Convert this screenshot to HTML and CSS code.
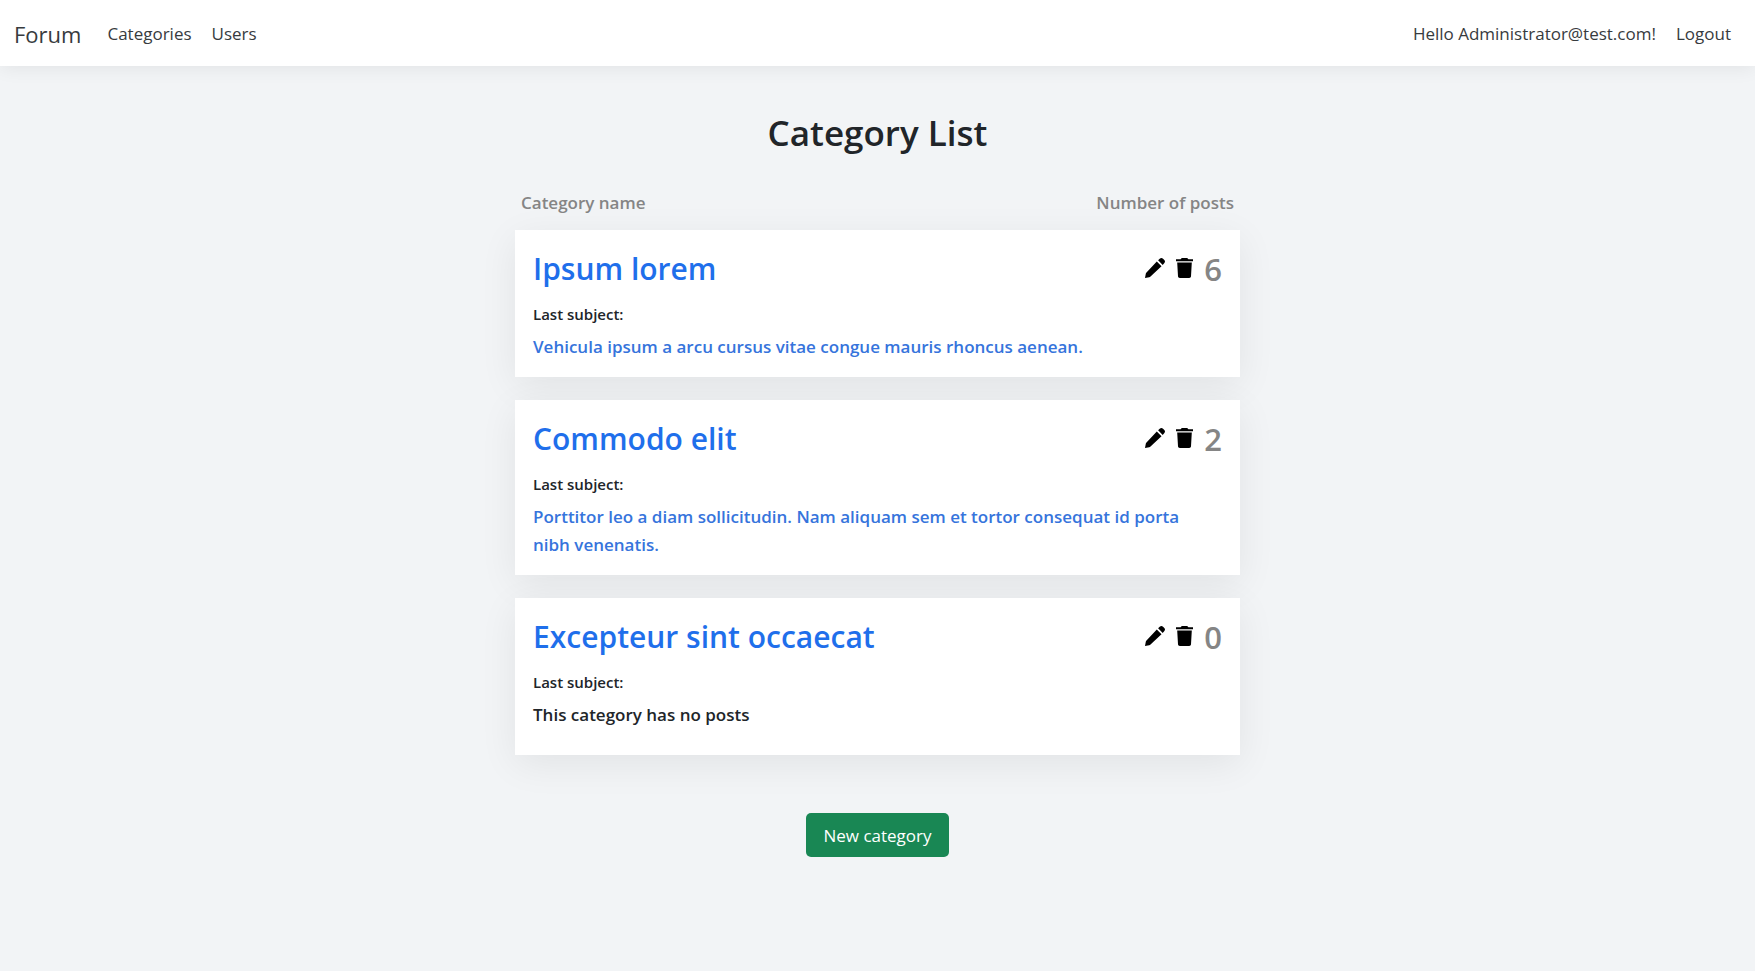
FILE: index.html
```html
<!DOCTYPE html>
<html lang="en">
<head>
<meta charset="utf-8">
<meta name="viewport" content="width=device-width, initial-scale=1">
<title>Category List - Forum</title>
<link rel="stylesheet" href="styles.css">
</head>
<body>
<svg class="sprite" aria-hidden="true">
  <symbol id="pencil" viewBox="0 0 20 20"><path d="M11.800 3.500l4.700 4.700L5.500 18.500c-.4.400-.8.600-1.300.7L0 20l.8-4.200c.1-.5.300-.9.700-1.300zM13.100 2.300l1.600-1.500c1.100-1.100 2.400-1 3.300-.1l1.300 1.300c.9.900 1 2.200-.1 3.300L17.700 6.900z"/></symbol>
  <symbol id="trash" viewBox="0 0 17 20"><path d="M0 1.200H4.600L5.800 0H11.200L12.400 1.200H17V3.200H0zM1.200 4.400H15.800L15 18.300C14.900 19.300 14.200 20 13.200 20H3.800C2.800 20 2.100 19.300 2 18.300z"/></symbol>
</svg>
<header class="navbar">
  <a class="brand" href="#">Forum</a>
  <nav class="links">
    <a href="#">Categories</a>
    <a href="#">Users</a>
  </nav>
  <div class="account">
    <span>Hello Administrator@test.com!</span>
    <a href="#">Logout</a>
  </div>
</header>
<main class="content">
  <h1 class="title">Category List</h1>
  <div class="labels"><span>Category name</span><span>Number of posts</span></div>
  <section class="card">
    <div class="card-head">
      <h2 class="name"><a href="#">Ipsum lorem</a></h2>
      <div class="tools">
        <button class="tool" aria-label="Edit"><svg class="pencil"><use href="#pencil"/></svg></button>
        <button class="tool" aria-label="Delete"><svg class="trash"><use href="#trash"/></svg></button>
        <span class="count">6</span>
      </div>
    </div>
    <p class="last">Last subject:</p>
    <p class="subject"><a href="#">Vehicula ipsum a arcu cursus vitae congue mauris rhoncus aenean.</a></p>
  </section>
  <section class="card">
    <div class="card-head">
      <h2 class="name"><a href="#">Commodo elit</a></h2>
      <div class="tools">
        <button class="tool" aria-label="Edit"><svg class="pencil"><use href="#pencil"/></svg></button>
        <button class="tool" aria-label="Delete"><svg class="trash"><use href="#trash"/></svg></button>
        <span class="count">2</span>
      </div>
    </div>
    <p class="last">Last subject:</p>
    <p class="subject"><a href="#">Porttitor leo a diam sollicitudin. Nam aliquam sem et tortor consequat id porta nibh venenatis.</a></p>
  </section>
  <section class="card">
    <div class="card-head">
      <h2 class="name"><a href="#">Excepteur sint occaecat</a></h2>
      <div class="tools">
        <button class="tool" aria-label="Edit"><svg class="pencil"><use href="#pencil"/></svg></button>
        <button class="tool" aria-label="Delete"><svg class="trash"><use href="#trash"/></svg></button>
        <span class="count">0</span>
      </div>
    </div>
    <p class="last">Last subject:</p>
    <p class="subject empty">This category has no posts</p>
  </section>
  <button class="create">New category</button>
</main>
</body>
</html>
```
FILE: styles.css
```css
* { box-sizing: border-box; }
body {
  margin: 0;
  background: #f2f4f6;
  color: #212529;
  font: 400 17px/28px "Segoe UI", "Open Sans", "Noto Sans", sans-serif;
}
a { color: inherit; text-decoration: none; }
h1, h2, p { margin: 0; }
.sprite { position: absolute; width: 0; height: 0; }
.navbar {
  display: flex;
  align-items: center;
  padding: 20px 24px 18px 14px;
  background: #fff;
  color: #373b3e;
  box-shadow: 0 2px 18px rgba(0, 0, 0, .07);
}
.brand { font-size: 22px; margin-right: 26px; }
.links { display: flex; gap: 20px; }
.account { display: flex; gap: 20px; margin-left: auto; }
.content {
  width: 100%;
  max-width: 725px;
  margin: 0 auto;
  padding: 43px 0;
  display: flex;
  flex-direction: column;
}
.title { font-size: 35px; font-weight: 600; line-height: 48px; text-align: center; }
.labels {
  display: flex;
  justify-content: space-between;
  padding: 32px 6px 13px;
  color: #858585;
  font-weight: 600;
}
.card {
  margin-bottom: 23px;
  padding: 19px 18px 16px;
  background: #fff;
  box-shadow: 0 9px 36px rgba(0, 0, 0, .07);
  font-weight: 600;
}
.card-head { display: flex; justify-content: space-between; align-items: center; }
.name { color: #1f6feb; font-size: 30px; font-weight: 600; line-height: 40px; }
.tools { display: flex; align-items: center; gap: 11px; }
.tool { display: flex; padding: 0 0 2px; border: 0; background: none; color: #000; cursor: pointer; }
.tool svg { fill: currentColor; height: 20px; }
.pencil { width: 20px; }
.trash { width: 17px; }
.count { color: #858585; font-size: 31px; line-height: 40px; }
.last { padding-top: 11px; font-size: 15px; line-height: 28px; }
.subject { padding: 5px 24px 0 0; }
.subject a { color: #3674dc; }
.empty { padding-bottom: 10px; }
.create {
  align-self: center;
  margin-top: 35px;
  padding: 9px 17px 7px;
  border: 0;
  border-radius: 5px;
  background: #198754;
  color: #fff;
  font: inherit;
  cursor: pointer;
}
```
